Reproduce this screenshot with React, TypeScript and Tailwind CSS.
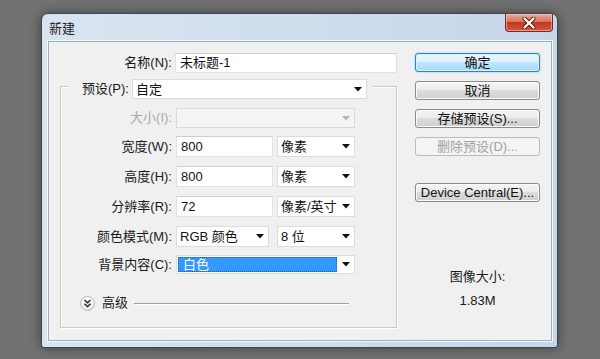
import React from "react";

const FONT = '"Liberation Sans", "Noto Sans CJK SC", sans-serif';

function Arrow({ disabled }: { disabled?: boolean }) {
  return (
    <svg width="8" height="5" viewBox="0 0 8 5" className="shrink-0">
      <path d="M0 0 L8 0 L4 4.5 Z" fill={disabled ? "#b5b5b5" : "#111"} />
    </svg>
  );
}

function Select({
  value,
  w,
  disabled,
  highlight,
}: {
  value: string;
  w: string;
  disabled?: boolean;
  highlight?: boolean;
}) {
  return (
    <div
      className={`${w} h-full flex items-center border whitespace-nowrap ${
        disabled ? "border-[#d9d9d9] bg-[#f4f4f4]" : "border-[#dcdcdc] bg-white"
      }`}
    >
      {highlight ? (
        <div className="flex-1 h-full p-[1px]">
          <div className="h-full bg-[#3399ff] border border-dotted border-[#1c5fa8] flex items-center pl-[4px] text-white">
            {value}
          </div>
        </div>
      ) : (
        <div className="flex-1 min-w-0 pl-[3px] text-[#111] leading-none overflow-hidden">{value}</div>
      )}
      <div className="w-[16px] h-full flex items-center justify-center shrink-0">
        <Arrow disabled={disabled} />
      </div>
    </div>
  );
}

function Input({ value, w }: { value: string; w: string }) {
  return (
    <div className={`${w} h-full flex items-center bg-white border border-[#e2e2e2] border-t-[#cfcfcf] pl-[4px] text-[#111]`}>
      {value}
    </div>
  );
}

function Label({ text, disabled }: { text: string; disabled?: boolean }) {
  return (
    <div className={`w-[115px] text-right pr-[4px] whitespace-nowrap ${disabled ? "text-[#a8a8a8]" : "text-[#1a1a1a]"}`}>{text}</div>
  );
}

function Btn({ text, kind }: { text: string; kind?: "default" | "disabled" }) {
  const base = "w-[125px] h-[19px] rounded-[3px] border flex items-center justify-center leading-none whitespace-nowrap";
  if (kind === "default")
    return (
      <div className={`${base} border-[#3c7fb1] bg-[linear-gradient(#eaf6fd,#d9f0fc_50%,#bee6fd_50%,#a7d9f5)] shadow-[inset_0_0_0_1px_#d8f0fb,0_0_2px_#7cc3ea] text-[#111]`}>
        {text}
      </div>
    );
  if (kind === "disabled")
    return <div className={`${base} border-[#b9bcbe] bg-[#f4f4f4] text-[#a3a3a3]`}>{text}</div>;
  return (
    <div className={`${base} border-[#8a8a8a] bg-[linear-gradient(#f4f4f4,#ebebeb_50%,#dddddd_50%,#cfcfcf)] shadow-[inset_0_0_0_1px_#fbfbfb] text-[#111]`}>
      {text}
    </div>
  );
}

export default function App() {
  return (
    <div
      className="w-[600px] h-[359px] bg-[#727272] pl-[41px] pt-[13px] overflow-hidden text-[13px]"
      style={{ fontFamily: FONT }}
    >
      <div className="w-[517px] h-[335px] rounded-t-[7px] rounded-b-[3px] border border-[#3d4650] bg-[linear-gradient(90deg,#d9e4f1,#c6d6e9)] shadow-[0_0_12px_rgba(0,0,0,0.45)] flex flex-col">
        {/* title bar */}
        <div className="h-[27px] flex items-start justify-between shrink-0">
          <div className="pl-[7px] pt-[5px] text-[13px] text-[#1c1c1c]">新建</div>
          <div className="w-[48px] h-[18px] mr-[4px] rounded-b-[4px] border border-t-0 border-[#7d2b20] bg-[linear-gradient(#e9a99c,#d6735f_45%,#c2381f_50%,#d1593f)] shadow-[inset_0_0_0_1px_rgba(255,220,210,0.5)] flex items-center justify-center">
            <svg width="14" height="12" viewBox="0 0 14 12">
              <path d="M2.5 1.5 L11.5 10.5 M11.5 1.5 L2.5 10.5" stroke="#5a1a10" strokeWidth="4" strokeLinecap="round" />
              <path d="M2.5 1.5 L11.5 10.5 M11.5 1.5 L2.5 10.5" stroke="#ffffff" strokeWidth="2.2" strokeLinecap="round" />
            </svg>
          </div>
        </div>
        {/* body */}
        <div className="flex-1 pl-[6px] pr-[5px] pb-[6px] flex">
          <div className="w-[504px] h-[300px] bg-[#f0f0f0] border border-[#9aaec4] shadow-[0_0_0_1px_#f4f8fc] flex pt-[11px] text-[#1a1a1a]">
            {/* left column */}
            <div className="w-[349px] flex flex-col">
              <div className="h-[20px] flex items-center">
                <div className="w-[126px] text-right pr-[3px]">名称(N):</div>
                <Input value="未标题-1" w="w-[222px]" />
              </div>
              <div className="mt-[13px] ml-[11px] w-[337px] h-[242px] border border-[#c8c8c8] shadow-[1px_1px_0_#ffffff,inset_1px_1px_0_#ffffff] flex flex-col">
                {/* legend / preset row */}
                <div className="-mt-[8px] ml-[7px] w-[305px] h-[20px] bg-[#f0f0f0] flex items-center">
                  <div className="pl-[14px] w-[64px] text-[#1a1a1a] whitespace-nowrap">预设(P):</div>
                  <Select value="自定" w="w-[235px]" />
                </div>
                <div className="mt-[9px] h-[20px] flex items-center">
                  <Label text="大小(I):" disabled />
                  <Select value="" w="w-[179px]" disabled />
                </div>
                <div className="mt-[8px] h-[21px] flex items-center">
                  <Label text="宽度(W):" />
                  <Input value="800" w="w-[97px]" />
                  <div className="w-[4px]" />
                  <Select value="像素" w="w-[78px]" />
                </div>
                <div className="mt-[9px] h-[21px] flex items-center">
                  <Label text="高度(H):" />
                  <Input value="800" w="w-[97px]" />
                  <div className="w-[4px]" />
                  <Select value="像素" w="w-[78px]" />
                </div>
                <div className="mt-[9px] h-[21px] flex items-center">
                  <Label text="分辨率(R):" />
                  <Input value="72" w="w-[97px]" />
                  <div className="w-[4px]" />
                  <Select value="像素/英寸" w="w-[78px]" />
                </div>
                <div className="mt-[9px] h-[21px] flex items-center">
                  <Label text="颜色模式(M):" />
                  <Select value="RGB 颜色" w="w-[93px]" />
                  <div className="w-[8px]" />
                  <Select value="8 位" w="w-[78px]" />
                </div>
                <div className="mt-[8px] h-[19px] flex items-center">
                  <Label text="背景内容(C):" />
                  <Select value="白色" w="w-[179px]" highlight />
                </div>
                <div className="mt-[21px] h-[16px] flex items-center">
                  <div className="ml-[19px] w-[15px] h-[15px] rounded-full border border-[#b8b8b8] bg-[linear-gradient(#ffffff,#e4e4e4)] flex items-center justify-center">
                    <svg width="9" height="9" viewBox="0 0 9 9">
                      <path d="M1.5 1 L4.5 3.8 L7.5 1 M1.5 4.8 L4.5 7.6 L7.5 4.8" stroke="#222" strokeWidth="1.4" fill="none" />
                    </svg>
                  </div>
                  <div className="ml-[7px] text-[#1a1a1a]">高级</div>
                  <div className="ml-[6px] w-[215px] h-[1px] bg-[#a0a0a0] shadow-[0_1px_0_#ffffff]" />
                </div>
              </div>
            </div>
            {/* right column */}
            <div className="pl-[17px] flex flex-col">
              <div className="flex flex-col gap-[9px]">
                <Btn text="确定" kind="default" />
                <Btn text="取消" />
                <Btn text="存储预设(S)..." />
                <Btn text="删除预设(D)..." kind="disabled" />
              </div>
              <div className="mt-[27px]">
                <Btn text="Device Central(E)..." />
              </div>
              <div className="mt-[67px] w-[125px] flex flex-col items-center text-[#1a1a1a]">
                <div className="leading-[16px]">图像大小:</div>
                <div className="mt-[8px] leading-[16px]">1.83M</div>
              </div>
            </div>
          </div>
        </div>
      </div>
    </div>
  );
}
